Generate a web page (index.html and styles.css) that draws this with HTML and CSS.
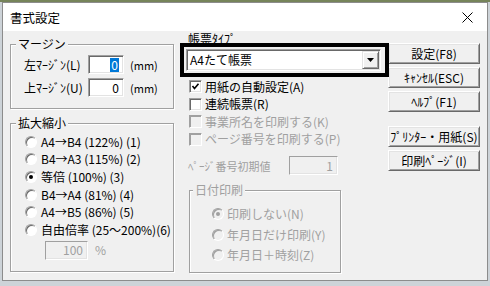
FILE: index.html
```html
<!doctype html>
<html>
	<head>
		<meta charset="utf-8">
		<title>書式設定</title>
		<link rel="stylesheet" href="styles.css">
	</head>
	<body>
		<div id="dialog">
			<div class="titlebar">
				<span class="title">書式設定</span>
				<svg class="close" width="11" height="11" viewBox="0 0 11 11"><path d="M0.5 0.5 L10.5 10.5 M10.5 0.5 L0.5 10.5" stroke="#000" stroke-width="1" fill="none"/></svg>
			</div>

			<div class="content">
				<div class="col-left">
					<fieldset class="group" id="margin">
						<legend>マージン</legend>
						<div class="field-row">
							<span class="label">左ﾏｰｼﾞﾝ(L)</span>
							<span class="edit"><span class="sel">0</span></span>
							<span class="unit">(mm)</span>
						</div>
						<div class="field-row">
							<span class="label">上ﾏｰｼﾞﾝ(U)</span>
							<span class="edit">0</span>
							<span class="unit">(mm)</span>
						</div>
					</fieldset>

					<fieldset class="group" id="scale">
						<legend>拡大縮小</legend>
						<div class="radio-row"><span class="radio"></span>A4→B4 (122%) (1)</div>
						<div class="radio-row"><span class="radio"></span>B4→A3 (115%) (2)</div>
						<div class="radio-row"><span class="radio checked"></span>等倍 (100%) (3)</div>
						<div class="radio-row"><span class="radio"></span>B4→A4 (81%) (4)</div>
						<div class="radio-row"><span class="radio"></span>A4→B5 (86%) (5)</div>
						<div class="radio-row"><span class="radio"></span>自由倍率 (25～200%)(6)</div>
						<div class="percent-row">
							<span class="edit disabled">100</span>
							<span class="unit disabled-text">%</span>
						</div>
					</fieldset>
				</div>

				<div class="col-mid">
					<div class="type-label">帳票ﾀｲﾌﾟ</div>
					<div class="combo">
						<span class="combo-text">A4たて帳票</span>
						<span class="combo-button"><svg width="7" height="4" viewBox="0 0 7 4"><path d="M0 0 L7 0 L3.5 4 Z" fill="#000"/></svg></span>
					</div>

					<div class="check-list">
						<div class="check-row">
							<span class="checkbox"><svg width="9" height="9" viewBox="0 0 9 9"><path d="M1.5 4 L3.5 6.5 L7.5 1.8" stroke="#000" stroke-width="1.6" fill="none"/></svg></span>
							用紙の自動設定(A)
						</div>
						<div class="check-row"><span class="checkbox"></span>連続帳票(R)</div>
						<div class="check-row disabled-text"><span class="checkbox disabled"></span>事業所名を印刷する(K)</div>
						<div class="check-row disabled-text"><span class="checkbox disabled"></span>ページ番号を印刷する(P)</div>
					</div>

					<div class="page-row">
						<span class="page-label disabled-text">ﾍﾟｰｼﾞ番号初期値</span>
						<span class="edit disabled page-edit">1</span>
					</div>

					<fieldset class="group disabled-text" id="date">
						<legend>日付印刷</legend>
						<div class="radio-row"><span class="radio checked disabled"></span>印刷しない(N)</div>
						<div class="radio-row"><span class="radio disabled"></span>年月日だけ印刷(Y)</div>
						<div class="radio-row"><span class="radio disabled"></span>年月日＋時刻(Z)</div>
					</fieldset>
				</div>

				<div class="col-right">
					<div class="button">設定(F8)</div>
					<div class="button">ｷｬﾝｾﾙ(ESC)</div>
					<div class="button">ﾍﾙﾌﾟ(F1)</div>
					<div class="button printer">ﾌﾟﾘﾝﾀｰ・用紙(S)</div>
					<div class="button print-page">印刷ﾍﾟｰｼﾞ(I)</div>
				</div>
			</div>

			<!-- annotation frame drawn over the combo -->
			<div class="highlight"></div>
		</div>
	</body>
</html>
```

FILE: styles.css
```css
html, body {
	padding: 0;
	margin: 0;
}
body {
	width: 490px;
	height: 286px;
	overflow: hidden;
	background: linear-gradient(to bottom, #76845a 0, #76845a 2px, #cdd3d8 2px);
	font-family: "Noto Sans CJK JP", sans-serif;
	font-size: 12px;
	color: #000;
}

#dialog {
	position: relative;
	margin: 2px 0 0 2px;
	width: 484px;
	height: 277px;
	border: 1px solid #8c8c8c;
	background: #f0f0f0;
}

.titlebar {
	height: 28px;
	background: #fff;
	display: flex;
	align-items: center;
	justify-content: space-between;
	padding: 0 14px 0 7px;
}
.title {
	line-height: 14px;
	padding-top: 1px;
	font-size: 12.5px;
}
.close {
	display: block;
}

.content {
	display: flex;
	align-items: flex-start;
}

/* group boxes */
fieldset.group {
	margin: 0;
	padding: 0;
	min-width: 0;
	box-sizing: border-box;
	border: 1px solid #a0a0a0;
	box-shadow: 1px 1px 0 #fff, inset 1px 1px 0 #fff;
}
fieldset.group legend {
	padding: 0 2px;
	line-height: 14px;
	background: #f0f0f0;
}

.col-left {
	margin-left: 7px;
	width: 164px;
	padding-top: 6px;
}
#margin {
	padding: 4px 0 11px 13px;
}
#margin legend {
	margin-left: -8px;
}
.field-row {
	display: flex;
	align-items: center;
	height: 19px;
}
.field-row + .field-row {
	margin-top: 4px;
}
.label {
	width: 64px;
	line-height: 14px;
}
.unit {
	margin-left: 6px;
	font-size: 11px;
	line-height: 14px;
}

.edit {
	box-sizing: border-box;
	display: flex;
	align-items: center;
	justify-content: flex-end;
	width: 36px;
	height: 19px;
	padding-right: 4px;
	background: #fff;
	border: 1px solid;
	border-color: #a0a0a0 #fff #fff #a0a0a0;
	box-shadow: inset 1px 1px 0 #696969, inset -1px -1px 0 #e3e3e3;
	line-height: 14px;
}
.edit.disabled {
	background: #f0f0f0;
	color: #a0a0a0;
	box-shadow: inset -1px -1px 0 #e3e3e3;
}
.sel {
	background: #0078d7;
	color: #fff;
	padding: 0 1px;
}

#scale {
	margin-top: 7px;
	padding: 3px 0 11px 14px;
}
#scale legend {
	margin-left: -9px;
}
.radio-row {
	display: flex;
	align-items: center;
	height: 17.6px;
	line-height: 14px;
	white-space: nowrap;
}
.radio {
	box-sizing: border-box;
	position: relative;
	width: 12px;
	height: 12px;
	margin-right: 4px;
	border-radius: 50%;
	border: 1px solid;
	border-color: #a0a0a0 #fff #fff #a0a0a0;
	box-shadow: inset 1px 1px 0 #696969;
	background: #fff;
}
.radio.checked::after {
	content: "";
	position: absolute;
	left: 3px;
	top: 3px;
	width: 4px;
	height: 4px;
	border-radius: 50%;
	background: #000;
}
.radio.disabled {
	background: #f0f0f0;
	box-shadow: inset 1px 1px 0 #a0a0a0;
}
.radio.disabled::after {
	background: #a0a0a0;
}
.percent-row {
	display: flex;
	align-items: center;
	margin-top: 2px;
	padding-left: 20px;
}
.percent-row .edit {
	width: 43px;
}
.percent-row .unit {
	margin-left: 7px;
	font-size: 12px;
}

.disabled-text {
	color: #a0a0a0;
}

/* middle column */
.col-mid {
	margin-left: 12px;
	width: 195px;
	padding-top: 1px;
}
.type-label {
	line-height: 14px;
	padding-left: 2px;
}
.combo {
	box-sizing: border-box;
	display: flex;
	align-items: center;
	justify-content: space-between;
	margin-top: 3px;
	height: 22px;
	padding: 0 1px 0 3px;
	background: #fff;
	border: 1px solid;
	border-color: #a0a0a0 #fff #fff #a0a0a0;
	box-shadow: inset 1px 1px 0 #696969, inset -1px -1px 0 #e3e3e3;
	line-height: 14px;
}
.combo-button {
	box-sizing: border-box;
	display: flex;
	align-items: center;
	justify-content: center;
	width: 17px;
	height: 18px;
	background: #f0f0f0;
	border: 1px solid;
	border-color: #e3e3e3 #696969 #696969 #e3e3e3;
	box-shadow: inset 1px 1px 0 #fff, inset -1px -1px 0 #a0a0a0;
}
.combo-button svg {
	display: block;
}

.check-list {
	margin-top: 7px;
}
.check-row {
	display: flex;
	align-items: center;
	height: 17.5px;
	padding-left: 3px;
	line-height: 14px;
	white-space: nowrap;
}
.checkbox {
	box-sizing: border-box;
	display: flex;
	align-items: center;
	justify-content: center;
	width: 13px;
	height: 13px;
	margin-right: 3px;
	background: #fff;
	border: 1px solid;
	border-color: #a0a0a0 #fff #fff #a0a0a0;
	box-shadow: inset 1px 1px 0 #696969, inset -1px -1px 0 #e3e3e3;
}
.checkbox.disabled {
	background: #f0f0f0;
	box-shadow: inset 1px 1px 0 #a0a0a0;
}

.page-row {
	display: flex;
	align-items: center;
	margin-top: 8px;
	height: 19px;
}
.page-label {
	width: 101px;
	padding-left: 2px;
	line-height: 14px;
	font-size: 11px;
}
.page-edit {
	width: 49px;
}

#date {
	margin: 8px 0 0 3px;
	width: 152px;
	height: 90px;
	padding: 7px 0 0 22px;
}
#date legend {
	margin-left: -19px;
}
#date .radio-row {
	height: 20.5px;
}
#date .radio {
	margin-right: 3px;
}

/* right column */
.col-right {
	margin-left: 7px;
	width: 92px;
	padding-top: 12px;
}
.button {
	box-sizing: border-box;
	height: 21px;
	margin-bottom: 3px;
	display: flex;
	align-items: center;
	justify-content: center;
	background: #f0f0f0;
	border: 1px solid;
	border-color: #fff #696969 #696969 #fff;
	box-shadow: inset 1px 1px 0 #e3e3e3, inset -1px -1px 0 #a0a0a0;
	line-height: 14px;
	white-space: nowrap;
}
.button.printer {
	margin-top: 14px;
}
.button.print-page {
	margin-top: 2px;
}

.highlight {
	position: absolute;
	left: 177px;
	top: 40px;
	width: 209px;
	height: 34px;
	box-sizing: border-box;
	border: 4px solid #000;
}
```
